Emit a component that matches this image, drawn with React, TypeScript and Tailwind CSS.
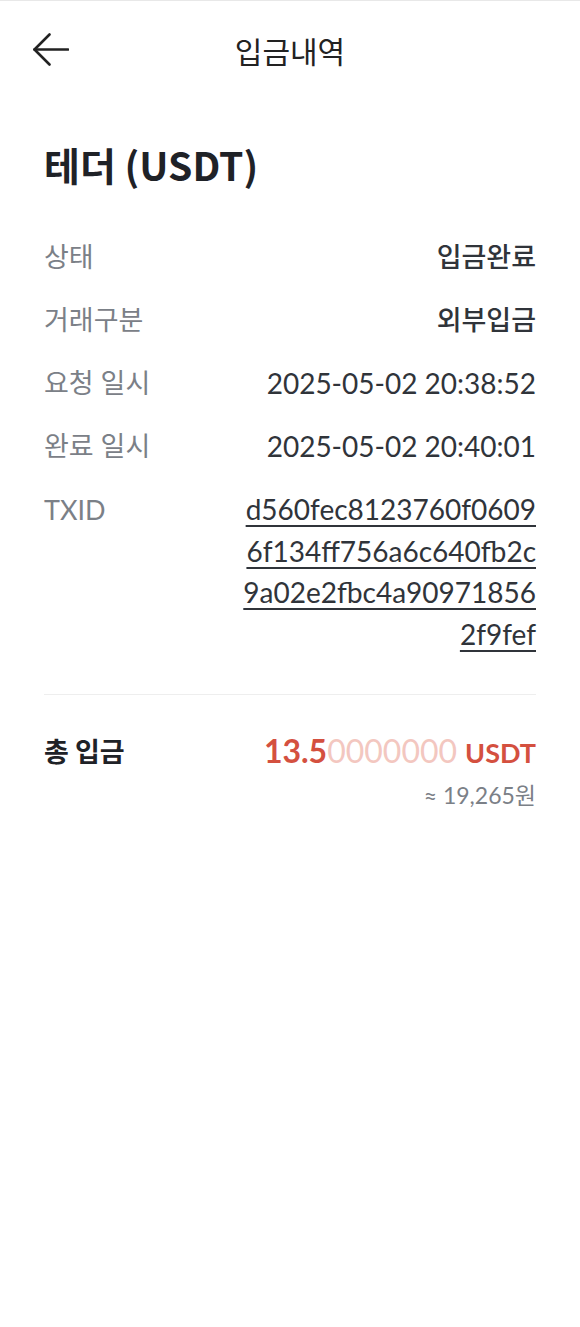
import React from "react";

const FONT = { fontFamily: 'Lato, "Noto Sans CJK KR", sans-serif' };
const CJK = { fontFamily: '"Noto Sans CJK KR", sans-serif' };

function Row({ label, value, korean }: { label: string; value: React.ReactNode; korean?: boolean }) {
  return (
    <div className="flex justify-between items-center h-[63px]">
      <span className="text-[27px] text-[#7b8087] leading-[42px]">{label}</span>
      <span className={`${korean ? "text-[27px] font-medium" : "text-[28px]"} text-[#30343a] leading-[42px]`}>{value}</span>
    </div>
  );
}

export default function App() {
  const txid = ["d560fec8123760f0609", "6f134ff756a6c640fb2c", "9a02e2fbc4a90971856", "2f9fef"];
  return (
    <div className="w-[580px] min-h-[1327px] bg-white" style={FONT}>
      <div className="h-px bg-[#e8e8e8]" />
      <header className="grid grid-cols-[1fr_auto_1fr] items-center h-[97px] px-[33px]">
        <svg width="36" height="33" viewBox="0 0 36 33" fill="none" stroke="#222" strokeWidth="2.6" strokeLinecap="round" strokeLinejoin="round">
          <path d="M35 16.5H1.5" />
          <path d="M16.5 1.5L1.5 16.5L16.5 31.5" />
        </svg>
        <h1 className="text-[30px] text-[#222] leading-none" style={CJK}>입금내역</h1>
        <div />
      </header>
      <main className="px-[44px]">
        <h2 className="mt-[41px] text-[39px] font-bold text-[#1f2227] leading-[50px]" style={CJK}>테더 (USDT)</h2>
        <div className="mt-[36px]">
          <Row label="상태" value="입금완료" korean />
          <Row label="거래구분" value="외부입금" korean />
          <Row label="요청 일시" value="2025-05-02 20:38:52" />
          <Row label="완료 일시" value="2025-05-02 20:40:01" />
          <div className="flex justify-between items-start mt-[12px]">
            <span className="text-[27px] text-[#7b8087] leading-[41.7px]">TXID</span>
            <div className="flex flex-col items-end text-[28px] text-[#30343a] leading-[41.7px]">
              {txid.map((l) => (
                <span key={l} className="underline decoration-[1.5px] underline-offset-[5px]">{l}</span>
              ))}
            </div>
          </div>
        </div>
        <div className="mt-[38px] h-px bg-[#eeeeee]" />
        <div className="flex justify-between items-start mt-[36px]">
          <span className="text-[27px] font-bold text-[#1f2227] leading-[40px]" style={CJK}>총 입금</span>
          <div className="flex flex-col items-end">
            <div className="leading-[40px] font-bold text-[#d4503f]">
              <span className="text-[32px]">13.5</span>
              <span className="text-[32px] font-normal text-[#f3c7c0]">0000000</span>
              <span className="text-[27px] ml-[8px]">USDT</span>
            </div>
            <div className="text-[23px] text-[#7b8087] leading-[36px]">≈ 19,265원</div>
          </div>
        </div>
      </main>
    </div>
  );
}
